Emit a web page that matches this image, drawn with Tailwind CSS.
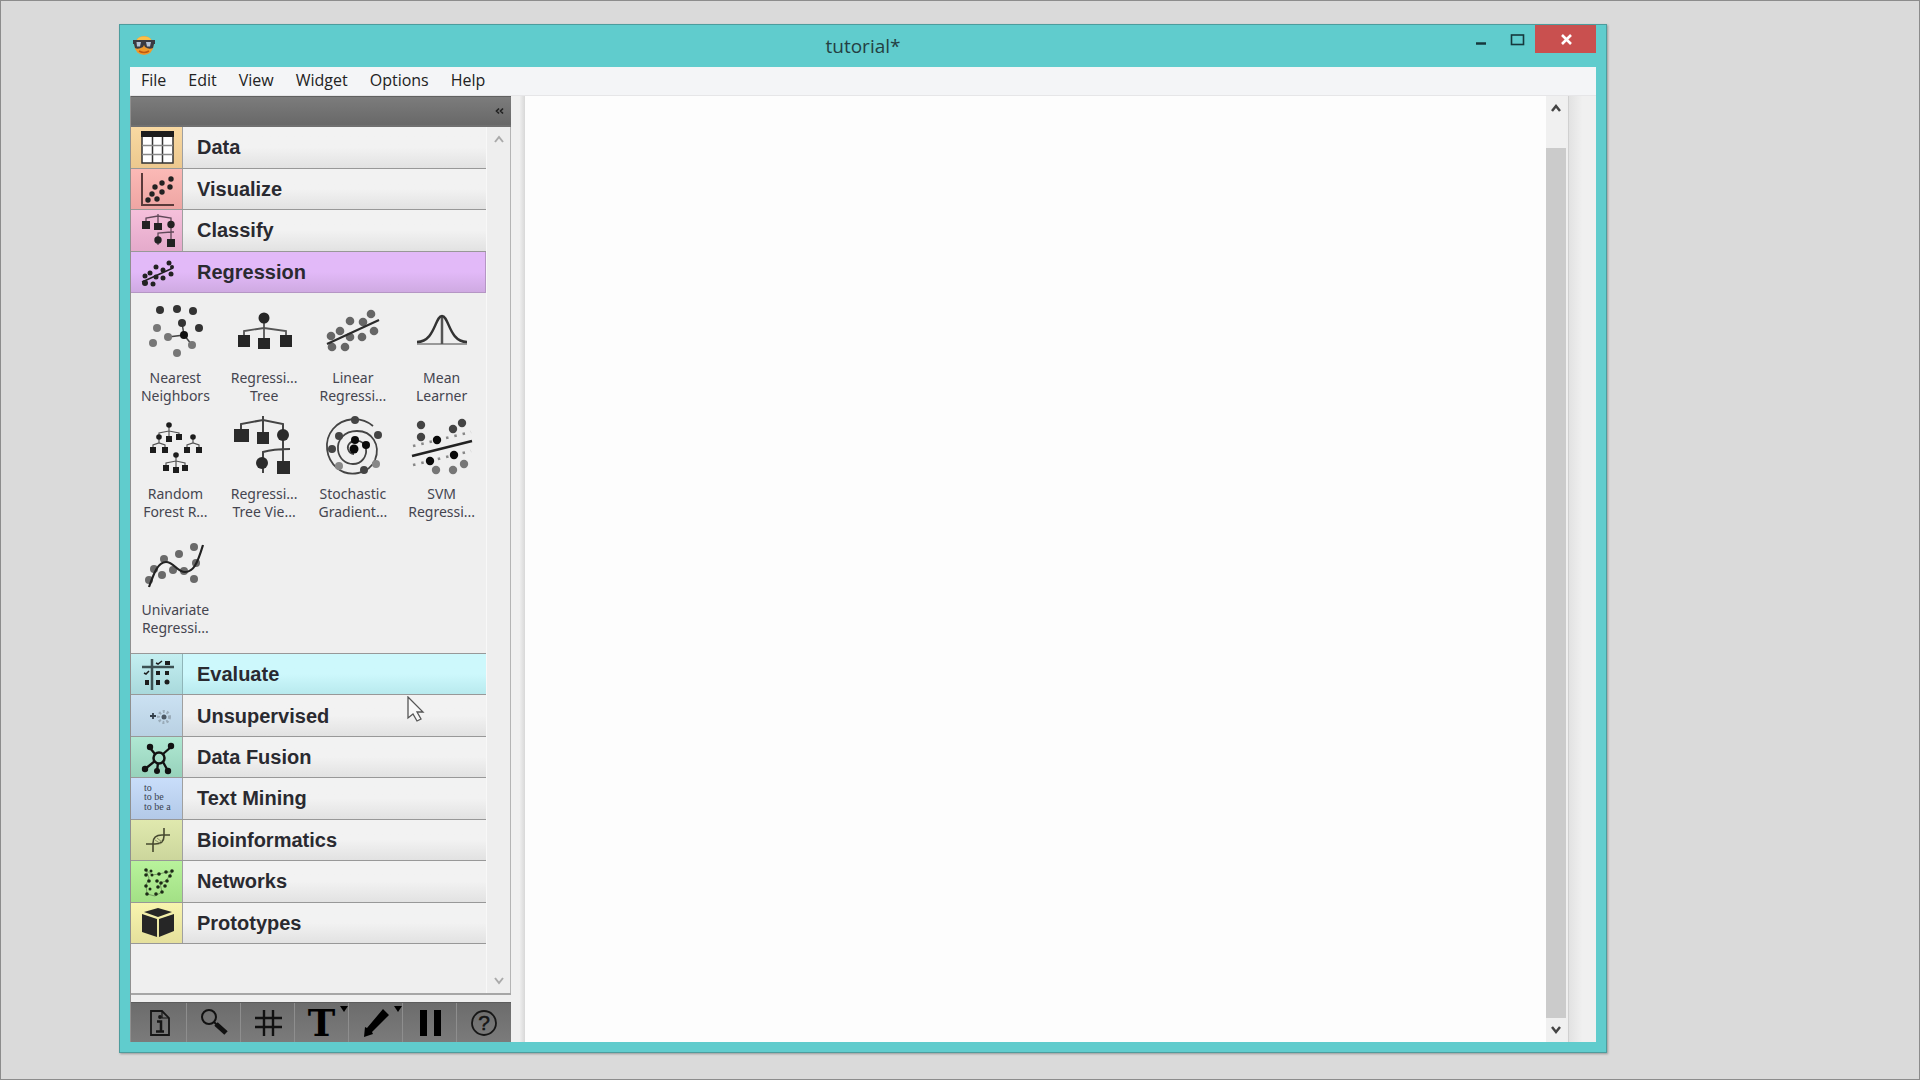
<!DOCTYPE html>
<html lang="en">
<head>
    <meta charset="UTF-8">
    <meta name="viewport" content="width=device-width, initial-scale=1.0">
    <title>tutorial*</title>
    <script src="https://cdn.jsdelivr.net/npm/@tailwindcss/browser@4"></script>
</head>
<body class="h-screen overflow-hidden bg-[#dadada] border border-[#8c8c8c] pt-[23px] pb-[26px] pl-[118px] pr-[312px] font-['Open_Sans','Noto_Sans',sans-serif] text-[#222]">
    <div class="relative h-full flex flex-col bg-[#60cccd] border border-[#4d9c9d] px-[10px] pb-[10px] shadow-[1px_1px_2px_#999]">

        <!-- Title bar -->
        <header class="relative h-[42px] shrink-0 flex justify-center">
            <svg class="absolute left-[2px] top-[9px] w-6 h-6" viewBox="0 0 24 24">
                <circle cx="12" cy="11.500" r="9.500" fill="#f09a2c"/>
                <ellipse cx="12" cy="6" rx="7" ry="3.500" fill="#fbc04a"/>
                <path d="M1 6h22v4h-1l-1 4q-4 2-8-1l-1-2-1 2q-5 3-8 1L2 10H1z" fill="#3a3a42"/>
                <path d="M4.500 8h4.500l-1 4.500h-3zM14 8h5l-1 4.500h-3z" fill="#b4c2d6"/>
                <path d="M7 17q5 3 10 0" stroke="#c05a10" stroke-width="1.500" fill="none"/>
            </svg>
            <h1 class="text-[19px] leading-[42px] text-[#243f42]">tutorial*</h1>
            <div class="absolute right-0 top-0 flex h-[28px]">
                <button class="w-[34px] flex justify-center" aria-label="Minimize">
                    <svg class="w-8 h-7" viewBox="0 0 32 28"><path d="M11 18.500h10" stroke="#16383c" stroke-width="2.500"/></svg>
                </button>
                <button class="w-[37px] flex justify-center" aria-label="Maximize">
                    <svg class="w-8 h-7" viewBox="0 0 32 28"><rect x="10.500" y="10" width="12" height="9.500" fill="none" stroke="#16383c" stroke-width="1.600"/></svg>
                </button>
                <button class="w-[61px] bg-[#c9504f] flex justify-center" aria-label="Close">
                    <svg class="w-8 h-7" viewBox="0 0 32 28"><path d="M12 10l9 9M21 10l-9 9" stroke="#fff" stroke-width="2.600"/></svg>
                </button>
            </div>
        </header>

        <!-- Menu -->
        <nav class="h-[29px] shrink-0 flex items-center gap-[22px] pl-[11px] pb-[2px] bg-[#f4f5f7] border-b border-[#e6e6e8] text-[16px]">
            <button>File</button>
            <button>Edit</button>
            <button>View</button>
            <button>Widget</button>
            <button>Options</button>
            <button>Help</button>
        </nav>

        <main class="flex-1 min-h-0 flex bg-[#efefef]">

            <!-- Toolbox -->
            <aside class="w-[381px] shrink-0 flex flex-col border-l border-[#909090]">
                <div class="h-[31px] shrink-0 bg-linear-to-b from-[#7c7c7c] to-[#686868] border-t border-b-2 border-t-[#606060] border-b-[#707070] flex justify-end items-center pr-[6px]">
                    <button aria-label="Collapse">
                        <svg class="w-3 h-3" viewBox="0 0 12 12"><path d="M6 3.500L3.500 6 6 8.500M10 3.500L7.500 6l2.500 2.500" fill="none" stroke="#222" stroke-width="1.700"/></svg>
                    </button>
                </div>

                <div class="flex-1 min-h-0 flex border-b-2 border-[#a6a6a6]">
                    <div class="w-[355px] flex flex-col text-[20px] font-bold font-['Liberation_Sans',sans-serif] text-[#2a2a30]">
                        <div class="h-[166px] shrink-0 flex flex-col">
                            <button class="flex-1 flex items-stretch text-left border-b border-[#989898]">
                                <span class="w-[52px] flex items-center justify-center border-r border-[#a0a0a0] bg-linear-to-b from-[#f9d9a2] to-[#ecc88e]">
                                    <svg class="w-9 h-9" viewBox="0 0 36 36">
                                        <rect x="3" y="3" width="31" height="31" fill="#fff" stroke="#333" stroke-width="1.500"/>
                                        <path d="M2 2h33v6H2z" fill="#1d1d1d"/>
                                        <path d="M13.500 8v26M23.500 8v26" stroke="#333" stroke-width="1.500"/>
                                        <path d="M3 16.500h31M3 25.500h31" stroke="#888" stroke-width="1.300"/>
                                    </svg>
                                </span>
                                <span class="flex-1 flex items-center pl-[14px] bg-linear-to-b from-[#f2f2f2] from-50% to-[#e2e2e2]">Data</span>
                            </button>
                            <button class="flex-1 flex items-stretch text-left border-b border-[#989898]">
                                <span class="w-[52px] flex items-center justify-center border-r border-[#a0a0a0] bg-linear-to-b from-[#fbb9b6] to-[#eea5a3]">
                                    <svg class="w-9 h-9" viewBox="0 0 36 36" fill="#222">
                                        <path d="M3 2v32h32" fill="none" stroke="#5a3a3a" stroke-width="2"/>
                                        <circle cx="32" cy="8" r="2.700"/><circle cx="23" cy="12" r="2.700"/><circle cx="16" cy="16" r="2.700"/><circle cx="31" cy="16" r="2.700"/>
                                        <circle cx="23" cy="21" r="2.700"/><circle cx="13" cy="23" r="2.700"/><circle cx="9" cy="29" r="2.700"/><circle cx="18" cy="28" r="2.700"/>
                                    </svg>
                                </span>
                                <span class="flex-1 flex items-center pl-[14px] bg-linear-to-b from-[#f2f2f2] from-50% to-[#e2e2e2]">Visualize</span>
                            </button>
                            <button class="flex-1 flex items-stretch text-left border-b border-[#989898]">
                                <span class="w-[52px] flex items-center justify-center border-r border-[#a0a0a0] bg-linear-to-b from-[#f5c0db] to-[#e5aacb]">
                                    <svg class="w-9 h-9" viewBox="0 0 36 36" fill="#222">
                                        <path d="M19 2v12M7 13V6l12-2 13 2v25M19 33V21l13-1h3" fill="none" stroke="#604858" stroke-width="1.300"/>
                                        <path d="M3 9h8v8H3zM15 11h8v7h-8zM28 27h8v8h-8z"/><circle cx="32" cy="12.500" r="3.700"/><circle cx="19" cy="28" r="3.700"/>
                                    </svg>
                                </span>
                                <span class="flex-1 flex items-center pl-[14px] bg-linear-to-b from-[#f2f2f2] from-50% to-[#e2e2e2]">Classify</span>
                            </button>
                            <button class="flex-1 flex items-stretch text-left border-b border-r border-[#b596c4] bg-linear-to-b from-[#e2b9f8] from-50% to-[#cfaae2]">
                                <span class="w-[52px] flex items-center justify-center">
                                    <svg class="w-9 h-9" viewBox="0 0 36 36" fill="#222">
                                        <path d="M3 28L34 14" stroke="#222" stroke-width="1.500"/>
                                        <circle cx="30" cy="9" r="2.500"/><circle cx="33" cy="13" r="2"/><circle cx="17" cy="13" r="2.500"/><circle cx="24" cy="16" r="2.500"/><circle cx="32" cy="20" r="2.500"/>
                                        <circle cx="11" cy="19" r="2.500"/><circle cx="24" cy="24" r="2.500"/><circle cx="17" cy="23" r="2.500"/><circle cx="6" cy="22" r="2.500"/><circle cx="6" cy="29" r="3"/><circle cx="14" cy="30" r="2.500"/>
                                    </svg>
                                </span>
                                <span class="flex-1 flex items-center pl-[14px]">Regression</span>
                            </button>
                        </div>

                        <!-- Regression widgets -->
                        <div class="h-[360px] shrink-0 pt-[6px] grid grid-cols-4 auto-rows-[116px] text-[14px] leading-[18px] font-normal font-['Noto_Sans',sans-serif] text-[#45454f]">
                            <button class="flex flex-col items-center gap-[6px]">
                                <svg class="w-16 h-16" viewBox="0 0 64 64" fill="#333">
                                    <path d="M39 24l2 12-16 2M41 36l8 10" fill="none" stroke="#444" stroke-width="1.500"/>
                                    <circle cx="17" cy="11" r="4"/><circle cx="34" cy="10" r="4"/><circle cx="50" cy="12" r="4"/><circle cx="39" cy="24" r="4"/><circle cx="56" cy="29" r="4"/><circle cx="41" cy="36" r="4" fill="#111"/>
                                    <g fill="#777"><circle cx="14" cy="29" r="4"/><circle cx="25" cy="38" r="4"/><circle cx="10" cy="44" r="4"/><circle cx="49" cy="46" r="4"/><circle cx="34" cy="54" r="4"/></g>
                                </svg>
                                <span>Nearest<br>Neighbors</span>
                            </button>
                            <button class="flex flex-col items-center gap-[6px]">
                                <svg class="w-16 h-16" viewBox="0 0 64 64" fill="#262626">
                                    <path d="M32 19v26M12 42V32l20-3 22 3v10" fill="none" stroke="#555" stroke-width="1.800"/>
                                    <circle cx="32" cy="19" r="5.500"/><path d="M6 36h12v12H6zM26 39h12v11H26zM48 36h12v12H48z"/>
                                </svg>
                                <span>Regressi...<br>Tree</span>
                            </button>
                            <button class="flex flex-col items-center gap-[6px]">
                                <svg class="w-16 h-16" viewBox="0 0 64 64" fill="#666">
                                    <circle cx="50" cy="15" r="4.300"/><circle cx="29" cy="22" r="4.300"/><circle cx="42" cy="23" r="4.300"/><circle cx="19" cy="32" r="4.300"/><circle cx="53" cy="32" r="4.300"/>
                                    <circle cx="10" cy="37" r="4.300"/><circle cx="29" cy="38" r="4.300"/><circle cx="41" cy="38" r="4.300"/><circle cx="11" cy="48" r="4.300"/><circle cx="24" cy="48" r="4.300"/>
                                    <path d="M6 45L58 21" stroke="#2b2b2b" stroke-width="2.200"/>
                                </svg>
                                <span>Linear<br>Regressi...</span>
                            </button>
                            <button class="flex flex-col items-center gap-[6px]">
                                <svg class="w-16 h-16" viewBox="0 0 64 64" fill="none">
                                    <path d="M7 45h50" stroke="#999" stroke-width="2"/><path d="M32 17v28" stroke="#555" stroke-width="2.500"/>
                                    <path d="M7 43C25 43 25 17 32 17s7 26 25 26" stroke="#333" stroke-width="2.400"/>
                                </svg>
                                <span>Mean<br>Learner</span>
                            </button>
                            <button class="flex flex-col items-center gap-[6px]">
                                <svg class="w-16 h-16" viewBox="0 0 64 64" fill="#1c1c1c">
                                    <path d="M26 10v14M16 22v-4l10-2 10 2v4M16 22v6M10 35v-5l6-2 6 2v5M50 22v6M44 35v-5l6-2 6 2v5M33 40v14M23 53v-5l10-2 9 2v5" fill="none" stroke="#555" stroke-width="1.200"/>
                                    <circle cx="26" cy="10" r="2.800"/><circle cx="16" cy="22" r="2.800"/><circle cx="50" cy="22" r="2.800"/><circle cx="33" cy="40" r="2.800"/>
                                    <path d="M23 21h6v6h-6zM33 19h6v6h-6zM7 32h6v6H7zM19 32h6v6h-6zM41 32h6v6h-6zM53 32h6v6h-6zM20 50h6v6h-6zM30 52h6v6h-6zM39 50h6v6h-6z"/>
                                </svg>
                                <span>Random<br>Forest R...</span>
                            </button>
                            <button class="flex flex-col items-center gap-[6px]">
                                <svg class="w-16 h-16" viewBox="0 0 64 64" fill="#2b2b2b">
                                    <path d="M31 1v22M9 20V9l22-4 20 4v43M31 58V37q10-3 27-3" fill="none" stroke="#444" stroke-width="2"/>
                                    <path d="M2 14h15v13H2zM25 17h12v12H25zM45 46h13v13H45z"/><circle cx="51" cy="20" r="6"/><circle cx="30" cy="48" r="6"/>
                                </svg>
                                <span>Regressi...<br>Tree Vie...</span>
                            </button>
                            <button class="flex flex-col items-center gap-[6px]">
                                <svg class="w-16 h-16" viewBox="0 0 64 64" fill="#444">
                                    <path d="M52 11C40 1 22 2 12 14 2 26 5 44 16 53c12 10 32 6 38-8 6-15-3-29-18-29-13 0-20 9-19 19 1 9 8 14 15 14 9 0 14-8 13-15-1-6-6-9-10-8-6 0-9 4-8 8 1 3 3 5 6 5" fill="none" stroke="#444" stroke-width="1.800"/>
                                    <circle cx="34" cy="5" r="4"/><circle cx="57" cy="20" r="4"/><circle cx="18" cy="21" r="4"/><circle cx="11" cy="34" r="4"/><circle cx="43" cy="55" r="4"/>
                                    <g fill="#888"><circle cx="18" cy="51" r="4"/><circle cx="55" cy="49" r="4"/></g>
                                    <g fill="#0a0a0a"><circle cx="34" cy="25" r="4"/><circle cx="45" cy="30" r="4"/><circle cx="33" cy="34" r="4.500"/></g>
                                </svg>
                                <span>Stochastic<br>Gradient...</span>
                            </button>
                            <button class="flex flex-col items-center gap-[6px]">
                                <svg class="w-16 h-16" viewBox="0 0 64 64" fill="#444">
                                    <path d="M3 31l58-14M3 50l58-14" stroke="#888" stroke-width="2.500" stroke-dasharray="2.500 6"/>
                                    <path d="M2 41l60-15" stroke="#222" stroke-width="2.500"/>
                                    <circle cx="11" cy="10" r="4.200"/><circle cx="11" cy="22" r="4.200"/><circle cx="43" cy="14" r="4.200"/><circle cx="52" cy="8" r="4.200"/>
                                    <g fill="#0a0a0a"><circle cx="27" cy="25" r="4.200"/><circle cx="20" cy="46" r="4.200"/><circle cx="44" cy="40" r="4.200"/></g>
                                    <g fill="#777"><circle cx="26" cy="55" r="4.200"/><circle cx="43" cy="55" r="4.200"/><circle cx="54" cy="49" r="4.200"/></g>
                                </svg>
                                <span>SVM<br>Regressi...</span>
                            </button>
                            <button class="flex flex-col items-center gap-[6px]">
                                <svg class="w-16 h-16" viewBox="0 0 64 64" fill="#6a6a6a">
                                    <circle cx="51" cy="16" r="4"/><circle cx="36" cy="23" r="4"/><circle cx="21" cy="28" r="4"/><circle cx="53" cy="32" r="4"/><circle cx="11" cy="38" r="4"/>
                                    <circle cx="30" cy="39" r="4"/><circle cx="19" cy="44" r="4"/><circle cx="41" cy="40" r="4"/><circle cx="6" cy="49" r="4"/><circle cx="51" cy="48" r="4"/>
                                    <path d="M6 56C11 42 15 31 23 31s11 10 19 10S54 34 60 14" fill="none" stroke="#222" stroke-width="2.200"/>
                                </svg>
                                <span>Univariate<br>Regressi...</span>
                            </button>
                        </div>

                        <div class="h-[291px] shrink-0 flex flex-col border-t border-[#989898]">
                            <button class="flex-1 flex items-stretch text-left border-b border-[#989898]">
                                <span class="w-[52px] flex items-center justify-center border-r border-[#8fb5b8] bg-linear-to-b from-[#c4eff1] to-[#a9d9dc]">
                                    <svg class="w-9 h-9" viewBox="0 0 36 36" fill="#1d1d1d">
                                        <path d="M3 11h32M13 3v31" stroke="#3c5052" stroke-width="2.500"/>
                                        <path d="M17 15h4v4h-4zM26 15h4v4h-4zM6 24h4v5H6zM17 24h4v5h-4zM26 5h5v4h-5z"/><circle cx="28" cy="26" r="2.500"/>
                                        <path d="M17 7l2 1 4-3M5 17l2 1 3-3" fill="none" stroke="#1d1d1d" stroke-width="1.500"/>
                                    </svg>
                                </span>
                                <span class="flex-1 flex items-center pl-[14px] bg-linear-to-b from-[#cdf8fc] from-50% to-[#b8eaee]">Evaluate</span>
                            </button>
                            <button class="flex-1 flex items-stretch text-left border-b border-[#989898]">
                                <span class="w-[52px] flex items-center justify-center border-r border-[#a0a0a0] bg-linear-to-b from-[#cbe1f2] to-[#b9d1e3]">
                                    <svg class="w-9 h-9" viewBox="0 0 36 36">
                                        <path d="M14 15v6M11 18h6" stroke="#333f4a" stroke-width="1.800"/>
                                        <circle cx="25" cy="19" r="5.500" fill="none" stroke="#9aabb8" stroke-width="3" stroke-dasharray="2 2"/>
                                        <circle cx="25" cy="19" r="2.500" fill="#4c5863"/>
                                    </svg>
                                </span>
                                <span class="flex-1 flex items-center pl-[14px] bg-linear-to-b from-[#f2f2f2] from-50% to-[#e2e2e2]">Unsupervised</span>
                            </button>
                            <button class="flex-1 flex items-stretch text-left border-b border-[#989898]">
                                <span class="w-[52px] flex items-center justify-center border-r border-[#a0a0a0] bg-linear-to-b from-[#b0e8d3] to-[#97d2bb]">
                                    <svg class="w-9 h-9" viewBox="0 0 36 36" fill="#111">
                                        <path d="M11 9l5 6M32 8l-8 7M6 30l10-8M18 32l1-8M29 32l-5-9" stroke="#111" stroke-width="2.300"/>
                                        <circle cx="20" cy="19" r="5.500" fill="none" stroke="#111" stroke-width="2.500"/>
                                        <circle cx="11" cy="8" r="3.200"/><circle cx="32" cy="7" r="3.200"/><circle cx="6" cy="30" r="3.200"/><circle cx="18" cy="32" r="3"/><circle cx="29" cy="32" r="3.200"/>
                                    </svg>
                                </span>
                                <span class="flex-1 flex items-center pl-[14px] bg-linear-to-b from-[#f2f2f2] from-50% to-[#e2e2e2]">Data Fusion</span>
                            </button>
                            <button class="flex-1 flex items-stretch text-left border-b border-[#989898]">
                                <span class="w-[52px] flex items-center justify-center border-r border-[#a0a0a0] bg-linear-to-b from-[#c9defa] to-[#b3c9e8]">
                                    <svg class="w-9 h-9 text-[10px] font-normal font-['Liberation_Serif',serif]" viewBox="0 0 36 36" fill="#39424f">
                                        <text x="5" y="11">to</text><text x="5" y="20">to be</text><text x="5" y="30">to be a</text>
                                    </svg>
                                </span>
                                <span class="flex-1 flex items-center pl-[14px] bg-linear-to-b from-[#f2f2f2] from-50% to-[#e2e2e2]">Text Mining</span>
                            </button>
                            <button class="flex-1 flex items-stretch text-left border-b border-[#989898]">
                                <span class="w-[52px] flex items-center justify-center border-r border-[#a0a0a0] bg-linear-to-b from-[#e0e9ae] to-[#ccd69c]">
                                    <svg class="w-9 h-9" viewBox="0 0 36 36" fill="none" stroke="#46492f" stroke-width="1.600">
                                        <path d="M7 22h9q9 0 9-8V6M14 30V21q0-8 9-8h8"/><path d="M16 18l6 4M18 16l5 4" stroke="#8b9068" stroke-width="1"/>
                                    </svg>
                                </span>
                                <span class="flex-1 flex items-center pl-[14px] bg-linear-to-b from-[#f2f2f2] from-50% to-[#e2e2e2]">Bioinformatics</span>
                            </button>
                            <button class="flex-1 flex items-stretch text-left border-b border-[#989898]">
                                <span class="w-[52px] flex items-center justify-center border-r border-[#a0a0a0] bg-linear-to-b from-[#b8f39b] to-[#a3e086]">
                                    <svg class="w-9 h-9" viewBox="0 0 36 36" fill="#1c2a16">
                                        <path d="M7 7l6 5 7-1 8-2 5 0-6 9-6 2 2 9-7 4-8-2-1-9 3-7z" fill="none" stroke="#6a8a58" stroke-width=".8"/>
                                        <circle cx="7" cy="7" r="1.800"/><circle cx="12" cy="8" r="1.500"/><circle cx="7" cy="12" r="1.800"/><circle cx="13" cy="12" r="1.500"/><circle cx="20" cy="11" r="1.800"/><circle cx="27" cy="9" r="1.800"/><circle cx="33" cy="8" r="1.800"/><circle cx="31" cy="13" r="1.800"/>
                                        <circle cx="10" cy="18" r="1.800"/><circle cx="18" cy="18" r="1.800"/><circle cx="22" cy="20" r="1.800"/><circle cx="28" cy="18" r="1.800"/><circle cx="7" cy="23" r="1.800"/><circle cx="11" cy="26" r="1.500"/><circle cx="19" cy="24" r="1.800"/><circle cx="26" cy="23" r="1.800"/>
                                        <circle cx="8" cy="31" r="1.800"/><circle cx="17" cy="31" r="1.800"/><circle cx="23" cy="29" r="1.800"/>
                                    </svg>
                                </span>
                                <span class="flex-1 flex items-center pl-[14px] bg-linear-to-b from-[#f2f2f2] from-50% to-[#e2e2e2]">Networks</span>
                            </button>
                            <button class="flex-1 flex items-stretch text-left border-b border-[#989898]">
                                <span class="w-[52px] flex items-center justify-center border-r border-[#a0a0a0] bg-linear-to-b from-[#f8f4ae] to-[#e5e09c]">
                                    <svg class="w-9 h-9" viewBox="0 0 36 36" fill="#262626">
                                        <path d="M5 7l14-4 14 4-14 5zM3 9l15 5v18L3 27zM35 9l-15 5v18l15-6z"/>
                                    </svg>
                                </span>
                                <span class="flex-1 flex items-center pl-[14px] bg-linear-to-b from-[#f2f2f2] from-50% to-[#e2e2e2]">Prototypes</span>
                            </button>
                        </div>
                    </div>

                    <div class="flex-1 flex flex-col justify-between items-center border-l border-[#f8f8f8] border-r border-r-[#b4b4b4] bg-[#eeeeee] py-[6px]">
                        <svg class="w-3 h-3" viewBox="0 0 12 12"><path d="M2 9l4-5 4 5" fill="none" stroke="#aaa" stroke-width="2"/></svg>
                        <svg class="w-3 h-3" viewBox="0 0 12 12"><path d="M2 3l4 5 4-5" fill="none" stroke="#aaa" stroke-width="2"/></svg>
                    </div>
                </div>

                <!-- Canvas tools -->
                <div class="mt-[7px] h-10 shrink-0 pl-[2px] grid grid-cols-7 divide-x divide-[#8e8e8e] bg-linear-to-b from-[#6c6c6c] to-[#7b7b7b] border-t border-[#5c5c5c]">
                    <button class="flex items-center justify-center" aria-label="Info">
                        <svg class="w-8 h-8" viewBox="0 0 32 32" fill="none" stroke="#161616" stroke-width="1.800">
                            <path d="M7 4h11l7 7v17H7z"/><path d="M18 4v7h7" stroke-width="1.200"/>
                            <path d="M13 14.500h4v9M12 24.500h8" stroke-width="2.500"/><circle cx="16" cy="10" r="1" />
                        </svg>
                    </button>
                    <button class="flex items-center justify-center" aria-label="Search">
                        <svg class="w-8 h-8" viewBox="0 0 32 32" fill="none" stroke="#111">
                            <circle cx="11" cy="10" r="7" stroke-width="2"/><path d="M16 15l3 3" stroke-width="2"/><path d="M18 17l10 9" stroke-width="5"/>
                        </svg>
                    </button>
                    <button class="flex items-center justify-center" aria-label="Grid">
                        <svg class="w-8 h-8" viewBox="0 0 32 32"><path d="M12 3v26M21 3v26M3 11h27M3 20h27" stroke="#111" stroke-width="2.400"/></svg>
                    </button>
                    <button class="relative flex items-center justify-center" aria-label="Text annotation">
                        <span class="font-['DejaVu_Serif',serif] font-bold text-[37px] leading-8 text-black">T</span>
                        <svg class="absolute right-0 top-[3px] w-2 h-[6px]" viewBox="0 0 8 6"><path d="M0 0h8L4 6z"/></svg>
                    </button>
                    <button class="relative flex items-center justify-center" aria-label="Arrow annotation">
                        <svg class="w-8 h-8" viewBox="0 0 32 32"><path d="M23 2l6 6-17 17 1 2-9 3 1-10 2 1z"/></svg>
                        <svg class="absolute right-0 top-[3px] w-2 h-[6px]" viewBox="0 0 8 6"><path d="M0 0h8L4 6z"/></svg>
                    </button>
                    <button class="flex items-center justify-center" aria-label="Pause">
                        <svg class="w-8 h-8" viewBox="0 0 32 32"><path d="M6 3h7v26H6zM20 3h7v26h-7z"/></svg>
                    </button>
                    <button class="flex items-center justify-center" aria-label="Help">
                        <svg class="w-8 h-8 text-[21px] font-['Liberation_Sans',sans-serif]" viewBox="0 0 32 32">
                            <circle cx="16" cy="16" r="12" fill="none" stroke="#161616" stroke-width="1.800"/><text x="16" y="23" text-anchor="middle" fill="#161616" stroke="#161616" stroke-width=".5">?</text>
                        </svg>
                    </button>
                </div>
            </aside>

            <div class="w-[14px] shrink-0 bg-linear-to-r from-[#f0f0f0] from-60% to-[#d8d8d8]"></div>

            <!-- Canvas -->
            <section class="flex-1 flex bg-[#fdfdfd]">
                <div class="flex-1"></div>
                <div class="w-5 flex flex-col items-center bg-[#f0f0f0]">
                    <svg class="mt-[6px] mb-[34px] w-3 h-3 shrink-0" viewBox="0 0 12 12"><path d="M2 9l4-5 4 5" fill="none" stroke="#444" stroke-width="2.500"/></svg>
                    <div class="flex-1 w-full bg-[#cbcbcb]"></div>
                    <svg class="my-[6px] w-3 h-3 shrink-0" viewBox="0 0 12 12"><path d="M2 3l4 5 4-5" fill="none" stroke="#444" stroke-width="2.500"/></svg>
                </div>
            </section>
            <div class="ml-[2px] w-[28px] shrink-0 border-l border-[#d0d0d0] bg-linear-to-r from-[#e2e2e2] to-[#f0f0f0] to-50%"></div>
        </main>

        <!-- Mouse pointer -->
        <svg class="absolute left-[287px] top-[671px] w-[18px] h-7" viewBox="0 0 18 28">
            <path d="M1 1v21l5-4 4 7 4-2-4-7h6z" fill="#f7f7f7" stroke="#555" stroke-width="1.300"/>
        </svg>
    </div>
</body>
</html>
